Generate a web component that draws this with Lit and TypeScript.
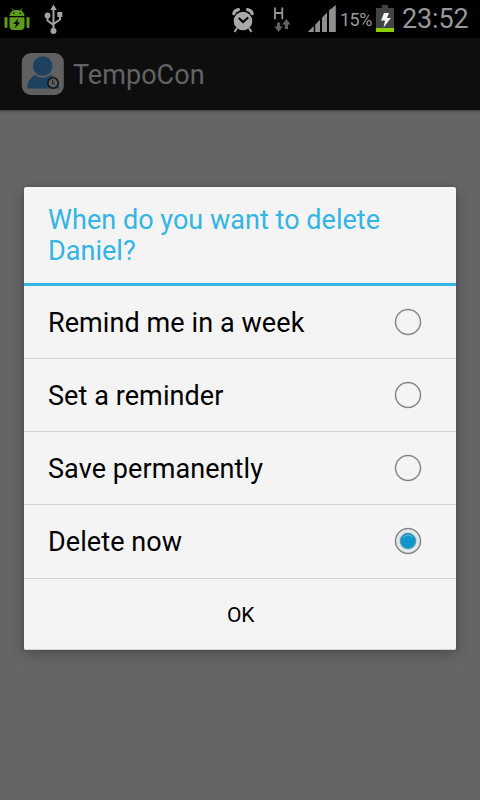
import { LitElement, html, css, svg } from "lit";
import { customElement, state } from "lit/decorators.js";

@customElement("status-bar")
class StatusBar extends LitElement {
  static styles = css`
    :host {
      display: flex;
      height: 38px;
      background: #000;
      color: #989898;
      font-family: Roboto, sans-serif;
      align-items: flex-start;
    }
    svg { display: block; flex: none; }
    .usb { margin-left: 12px; }
    .spacer { flex: 1; }
    .alarm { margin-right: 16px; }
    .data { margin-right: 14px; }
    .signal { margin-right: 4px; }
    .percent {
      width: 35px;
      font-size: 18px;
      line-height: 38px;
      white-space: nowrap;
      letter-spacing: -0.5px;
      padding-top: 1px;
      box-sizing: border-box;
      height: 38px;
    }
    .battery { margin-left: 1px; }
    .clock {
      width: 78px;
      margin-left: 8px;
      font-size: 27px;
      line-height: 38px;
      letter-spacing: -0.15px;
      white-space: nowrap;
    }
  `;
  render() {
    return html`
      <svg width="32" height="38" viewBox="0 0 32 38">
        <g fill="#5d9b1c">
          <path d="M9.500 16C9.800 12 12.500 10 17 10s7.200 2 7.500 6z" />
          <path d="M9.500 17.300h15V26a4 4 0 0 1-4 4h-7a4 4 0 0 1-4-4z" />
          <rect x="4.500" y="17" width="3" height="11" rx="1.300" />
          <rect x="26.500" y="17" width="3" height="11" rx="1.300" />
          <path d="M12 8.500l2 3M22 8.500l-2 3" stroke="#5d9b1c" stroke-width="1" />
        </g>
        <circle cx="13.700" cy="13.300" r=".8" /><circle cx="20.300" cy="13.300" r=".8" />
        <path d="M18.500 18.500l-5.300 5.500h3l-1.500 4.200 5.600-5.700h-3z" />
      </svg>
      <svg class="usb" width="20" height="38" viewBox="44 0 20 38">
        <g fill="none" stroke="#a3a3a3" stroke-width="2">
          <path d="M53.500 8v22M47.500 16v4.500l6 4.500M60 14.500v5l-6.500 4.500" />
        </g>
        <g fill="#a3a3a3">
          <path d="M53.500 4.500l3.300 5.500h-6.600z" />
          <circle cx="47.500" cy="15.500" r="2.900" />
          <rect x="57.300" y="12" width="5" height="5" />
          <circle cx="53.500" cy="31" r="3" />
        </g>
      </svg>
      <div class="spacer"></div>
      <svg class="alarm" width="24" height="38" viewBox="231 0 24 38">
        <g fill="#a9a9a9">
          <circle cx="243" cy="21" r="9.300" />
          <path d="M237 28l-2.500 4M249 28l2.500 4" stroke="#a9a9a9" stroke-width="2" />
        </g>
        <path d="M233.800 13.700c.5-2.300 2.200-3.700 4.600-4.100M252.200 13.700c-.5-2.300-2.200-3.700-4.600-4.100"
          fill="none" stroke="#a9a9a9" stroke-width="3.200" stroke-linecap="round" />
        <path d="M238.800 18l4.200 4 5.200-4.500" fill="none" stroke="#000" stroke-width="2.200" />
      </svg>
      <svg class="data" width="22" height="38" viewBox="271 0 22 38">
        <path d="M275 7.500v11.700M282.300 7.500v11.700M275 13h7.300" stroke="#969696" stroke-width="1.800" fill="none" />
        <path fill="#626262" d="M277 22.500h3.200v4h2.600L278.600 32l-4.200-5.500H277zM284.800 29h3.200v-4.500h2.600L286.400 19l-4.200 5.500h2.600z" />
      </svg>
      <svg class="signal" width="29" height="38" viewBox="307 0 29 38">
        <g fill="#8f8f8f">
          <path d="M307.800 32l6-6v6zM315.200 32v-7.300l4.800-4.900V32zM322 32V17.700l5-5.200V32zM329 32V10.500l6.800-5.500v27z" />
        </g>
      </svg>
      <div class="percent">15%</div>
      <svg class="battery" width="18" height="38" viewBox="376 0 18 38">
        <path fill="#414444" d="M376 8h6V5h6v3h6v20h-18z" />
        <rect x="376" y="28" width="18" height="4" fill="#91ce00" />
        <path fill="#f4f4f4" d="M384 13h5l-2 5h4l-7.500 9.500 1.500-7h-4z" />
      </svg>
      <div class="clock">23:52</div>
    `;
  }
}

@customElement("radio-mark")
class RadioMark extends LitElement {
  static properties = { checked: { type: Boolean } };
  declare checked: boolean;
  static styles = css`
    :host { display: block; width: 28px; height: 28px; }
    svg { display: block; }
  `;
  render() {
    return html`<svg width="28" height="28" viewBox="0 0 28 28">
      <circle cx="14" cy="14" r="12.500" fill=${this.checked ? "#e6e8e9" : "none"} stroke="#868989" stroke-width="1.500" />
      ${this.checked
        ? svg`<circle cx="14" cy="14" r="9.300" fill="#b9e2f2" />
            <circle cx="14" cy="14" r="7.700" fill="#0d97cd" stroke="#6f9199" stroke-width="1" />
            <path d="M9.500 10.300a6 6 0 0 1 9 0" fill="none" stroke="#53b9df" stroke-width="1.200" />`
        : null}
    </svg>`;
  }
}

@customElement("app-root")
class AppRoot extends LitElement {
  @state() selected = 3;
  options = ["Remind me in a week", "Set a reminder", "Save permanently", "Delete now"];

  static styles = css`
    :host {
      display: flex;
      flex-direction: column;
      width: 480px;
      height: 800px;
      overflow: hidden;
      background: #000;
      font-family: Roboto, sans-serif;
    }
    .bar {
      display: flex;
      align-items: center;
      box-sizing: border-box;
      height: 72px;
      padding-left: 21px;
      background: #0e0e0e;
      color: #636363;
    }
    .app {
      margin-left: 9px;
      font-size: 27px;
      line-height: 32px;
      letter-spacing: 0.05px;
      padding-top: 1px;
    }
    .page {
      flex: 1;
      display: flex;
      flex-direction: column;
      padding: 77px 24px 0;
      background: linear-gradient(#424242, #5c5c5c 2px, #656565 4px);
    }
    .dialog {
      display: flex;
      flex-direction: column;
      height: 463px;
      border-radius: 2px;
      background: #f4f4f4;
      box-shadow: 0 4px 14px rgba(0, 0, 0, 0.24), 0 0 3px rgba(0, 0, 0, 0.15);
    }
    .title {
      box-sizing: border-box;
      height: 99px;
      padding: 18px 24px 0;
      border-bottom: 3px solid #33b5e5;
      color: #33b5e5;
      font-size: 27px;
      line-height: 31px;
      white-space: nowrap;
      letter-spacing: 0.03px;
    }
    .row {
      display: flex;
      align-items: center;
      justify-content: space-between;
      box-sizing: border-box;
      height: 73px;
      padding: 0 34px 0 24px;
      border-bottom: 1px solid #d5d5d5;
      color: #000;
      font-size: 27px;
      letter-spacing: 0.08px;
    }
    .row:nth-of-type(5) { height: 74px; padding-bottom: 1px; }
    .label { padding-top: 1px; }
    .ok {
      flex: 1;
      border: 0;
      border-bottom: 1px solid #cfcfcf;
      border-radius: 0 0 2px 2px;
      background: transparent;
      padding: 2px 0 0 1px;
      color: #000;
      font: 21px Roboto, sans-serif;
      letter-spacing: -0.4px;
    }
  `;

  render() {
    return html`
      <status-bar></status-bar>
      <header class="bar">
        <svg width="43" height="44" viewBox="0 0 43 44">
          <rect x=".8" y="1" width="42" height="42" rx="9" fill="#606060" />
          <path d="M6.200 36.500c0-7 3.500-11 8-13.700h15c5.500 2.700 9 7 9 13.700z" fill="#1c425f" />
          <circle cx="21.700" cy="14" r="10.800" fill="#1c425f" stroke="#606060" stroke-width="2" />
          <circle cx="32" cy="31" r="5.200" fill="#606060" stroke="#151515" stroke-width="1.600" />
          <path d="M31.700 27.800v3.400l1.700 1.200" fill="none" stroke="#151515" stroke-width="1.100" />
        </svg>
        <div class="app">TempoCon</div>
      </header>
      <main class="page">
        <section class="dialog">
          <div class="title">When do you want to delete<br />Daniel?</div>
          ${this.options.map(
            (label, i) => html`<div class="row" @click=${() => (this.selected = i)}>
              <span class="label">${label}</span>
              <radio-mark .checked=${this.selected === i}></radio-mark>
            </div>`
          )}
          <button class="ok">OK</button>
        </section>
      </main>
    `;
  }
}
